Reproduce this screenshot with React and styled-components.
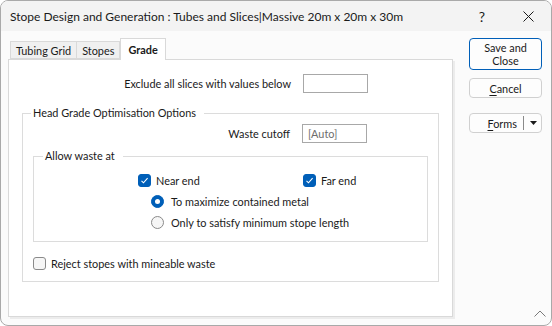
import React from 'react';
import styled, { createGlobalStyle } from 'styled-components';

const Global = createGlobalStyle`
  html, body { margin: 0; padding: 0; background: #ffffff; }
  body { font-family: Lato, "Liberation Sans", sans-serif; font-size: 12px; color: #1a1a1a; }
  *, *::before, *::after { box-sizing: border-box; }
`;

const Window = styled.div`
  position: relative;
  width: 552px;
  height: 326px;
  border: 1px solid #a9a9a9;
  border-radius: 8px;
  overflow: hidden;
  background: #fbfbfb;
  display: flex;
  flex-direction: column;
`;

const TitleBar = styled.div`
  height: 30px;
  flex: none;
  display: flex;
  align-items: center;
  background: #f3f3f3;
  padding-left: 9px;
  font-size: 12px;
`;

const TitleText = styled.div`
  flex: 1;
  white-space: nowrap;
  color: #1a1a1a;
`;

const CaptionButton = styled.div`
  width: 46px;
  height: 30px;
  display: flex;
  align-items: center;
  justify-content: center;
  font-size: 14px;
  color: #1a1a1a;
`;

const Body = styled.div`
  flex: 1;
  display: flex;
  padding: 7px 0 0 7px;
  font-size: 10.9px;
`;

const LeftColumn = styled.div`
  width: 445px;
  display: flex;
  flex-direction: column;
`;

const TabStrip = styled.div`
  display: flex;
  align-items: flex-end;
  height: 21px;
  padding-left: 2px;
  position: relative;
  z-index: 1;
`;

const Tab = styled.div`
  height: ${p => (p.$active ? '22px' : '18px')};
  margin-bottom: ${p => (p.$active ? '-1px' : '0')};
  padding: 0 ${p => (p.$active ? '7px' : '5px')};
  display: flex;
  align-items: center;
  border: 1px solid #d9d9d9;
  border-bottom: ${p => (p.$active ? 'none' : '1px solid #d9d9d9')};
  border-left: ${p => (p.$first || p.$active ? '1px solid #d9d9d9' : 'none')};
  background: ${p => (p.$active ? '#ffffff' : '#f0f0f0')};
  font-weight: ${p => (p.$active ? 700 : 400)};
  color: #1a1a1a;
  white-space: nowrap;
`;

const Panel = styled.div`
  height: 258px;
  background: #ffffff;
  border: 1px solid #d9d9d9;
  box-shadow: 2px 2px 0 #ececec;
  padding: 14px 13px 0 13px;
  display: flex;
  flex-direction: column;
`;

const FieldRow = styled.div`
  display: grid;
  grid-template-columns: ${p => p.$labelWidth}px 65px 1fr;
  column-gap: 12px;
  align-items: center;
  height: 19px;
`;

const FieldLabel = styled.div`
  text-align: right;
  white-space: nowrap;
`;

const TextBox = styled.div`
  height: 19px;
  border: 1px solid #a8a8a8;
  background: #ffffff;
  padding-left: 5px;
  display: flex;
  align-items: center;
  color: #6d6d6d;
`;

const Group = styled.fieldset`
  margin: ${p => p.$top}px 0 0 0;
  border: 1px solid #dcdcdc;
  padding: ${p => p.$pad};
  min-width: 0;
`;

const Legend = styled.legend`
  padding: 0 8px 0 2px;
  margin-left: ${p => p.$offset}px;
  line-height: 16px;
  color: #1a1a1a;
`;

const OptionsGrid = styled.div`
  display: grid;
  grid-template-columns: 165px auto;
  grid-auto-rows: 21px;
  margin-left: 104px;
`;

const OptionCell = styled.label`
  display: flex;
  align-items: center;
  gap: ${p => (p.$radio ? '7px' : '5px')};
  grid-column: ${p => (p.$span ? '1 / span 2' : 'auto')};
  padding-left: ${p => (p.$indent ? '13px' : '0')};
  white-space: nowrap;
`;

const Box = styled.span`
  width: 13px;
  height: 13px;
  flex: none;
  border-radius: 3px;
  display: flex;
  align-items: center;
  justify-content: center;
  background: ${p => (p.$checked ? '#005fb8' : '#f6f6f6')};
  border: 1px solid ${p => (p.$checked ? '#005fb8' : '#8a8a8a')};
`;

const Radio = styled.span`
  width: 13px;
  height: 13px;
  flex: none;
  border-radius: 50%;
  display: flex;
  align-items: center;
  justify-content: center;
  background: ${p => (p.$checked ? '#005fb8' : '#f6f6f6')};
  border: 1px solid ${p => (p.$checked ? '#005fb8' : '#8a8a8a')};
`;

const RadioDot = styled.span`
  width: 5px;
  height: 5px;
  border-radius: 50%;
  background: #ffffff;
`;

const SingleRow = styled.div`
  margin-top: 11px;
  height: 21px;
  display: flex;
  align-items: center;
`;

const RightColumn = styled.div`
  margin-left: 16px;
  width: 73px;
  display: flex;
  flex-direction: column;
`;

const Button = styled.div`
  height: ${p => p.$h}px;
  margin-top: ${p => p.$mt}px;
  border: 1px solid ${p => (p.$default ? '#005fb8' : '#d0d0d0')};
  border-radius: 4px;
  background: #fdfdfd;
  display: flex;
  align-items: center;
  justify-content: center;
  text-align: center;
  line-height: 13px;
  color: #1a1a1a;
`;

const SplitButton = styled(Button)`
  justify-content: flex-end;
  padding-right: 4px;
`;

const SplitDivider = styled.span`
  width: 1px;
  height: 14px;
  background: #8a8a8a;
  margin: 0 6px 0 6px;
`;

const Mnemonic = styled.span`
  text-decoration: underline;
  text-underline-offset: 2px;
`;

const Grip = styled.svg`
  position: absolute;
  right: 5px;
  bottom: 8px;
`;

const Check = () => (
  <svg width="9" height="9" viewBox="0 0 9 9">
    <path d="M1.5 4.8 L3.5 6.8 L7.6 2.2" fill="none" stroke="#fff" strokeWidth="1.1" />
  </svg>
);

const CheckBox = ({ checked, children }) => (
  <>
    <Box $checked={checked}>{checked && <Check />}</Box>
    <span>{children}</span>
  </>
);

export default function App() {
  return (
    <>
      <Global />
      <Window>
        <TitleBar>
          <TitleText>Stope Design and Generation : Tubes and Slices|Massive 20m x 20m x 30m</TitleText>
          <CaptionButton>?</CaptionButton>
          <CaptionButton>
            <svg width="11" height="11" viewBox="0 0 11 11">
              <path d="M0.5 0.5 L10.5 10.5 M10.5 0.5 L0.5 10.5" stroke="#1a1a1a" strokeWidth="1" />
            </svg>
          </CaptionButton>
        </TitleBar>
        <Body>
          <LeftColumn>
            <TabStrip>
              <Tab $first>Tubing Grid</Tab>
              <Tab>Stopes</Tab>
              <Tab $active>Grade</Tab>
            </TabStrip>
            <Panel>
              <FieldRow $labelWidth={269}>
                <FieldLabel>Exclude all slices with values below</FieldLabel>
                <TextBox />
              </FieldRow>
              <Group $top={12} $pad="3px 10px 7px 10px">
                <Legend $offset={-2}>Head Grade Optimisation Options</Legend>
                <FieldRow $labelWidth={257}>
                  <FieldLabel>Waste cutoff</FieldLabel>
                  <TextBox>[Auto]</TextBox>
                </FieldRow>
                <Group $top={5} $pad="6px 10px 8px 0">
                  <Legend $offset={9}>Allow waste at</Legend>
                  <OptionsGrid>
                    <OptionCell><CheckBox checked>Near end</CheckBox></OptionCell>
                    <OptionCell><CheckBox checked>Far end</CheckBox></OptionCell>
                    <OptionCell $span $indent $radio>
                      <Radio $checked><RadioDot /></Radio>
                      <span>To maximize contained metal</span>
                    </OptionCell>
                    <OptionCell $span $indent $radio>
                      <Radio />
                      <span>Only to satisfy minimum stope length</span>
                    </OptionCell>
                  </OptionsGrid>
                </Group>
                <SingleRow>
                  <OptionCell><CheckBox>Reject stopes with mineable waste</CheckBox></OptionCell>
                </SingleRow>
              </Group>
            </Panel>
          </LeftColumn>
          <RightColumn>
            <Button $default $h={32} $mt={0}>Save and<br />Close</Button>
            <Button $h={20} $mt={8}><span><Mnemonic>C</Mnemonic>ancel</span></Button>
            <SplitButton $h={20} $mt={15}>
              <span><Mnemonic>F</Mnemonic>orms</span>
              <SplitDivider />
              <svg width="7" height="4" viewBox="0 0 7 4"><path d="M0 0 L7 0 L3.5 4 Z" fill="#1a1a1a" /></svg>
            </SplitButton>
          </RightColumn>
        </Body>
        <Grip width="12" height="7" viewBox="0 0 12 7">
          <path d="M0.5 6.5 L6 1 L11.5 6.5" fill="none" stroke="#7a7a7a" strokeWidth="1" />
        </Grip>
      </Window>
    </>
  );
}
